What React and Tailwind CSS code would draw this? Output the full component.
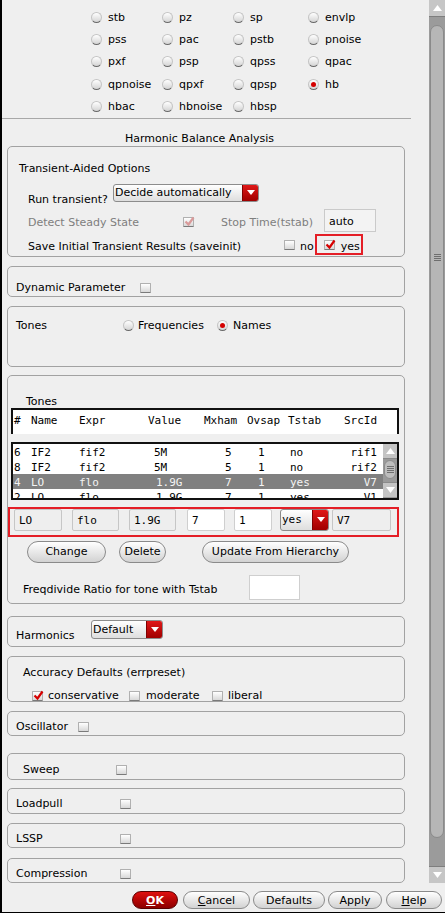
import React from 'react';

function Cb({ checked, disabled }) {
  return (
    <span className="relative inline-block w-[11px] h-[10px] shrink-0 rounded-[1px] border border-[#b0b0b0] border-b-[#7a7a7a] bg-linear-to-b from-white to-[#d8d8d8]">
      {checked && (
        <svg className="absolute left-[0px] top-[-2px]" width="11" height="11" viewBox="0 0 11 11">
          <path d="M1.5 5.5 L4.5 8.5 L9.5 1.5" fill="none" stroke={disabled ? '#d99a9a' : '#d60000'} strokeWidth="2.2" />
        </svg>
      )}
    </span>
  );
}

function Radio({ on }) {
  return (
    <span className="inline-flex w-[11px] h-[11px] shrink-0 items-center justify-center rounded-full border border-[#c4c4c4] border-b-[#6a6a6a] bg-linear-to-b from-white to-[#d4d4d4]">
      {on && <span className="w-[5px] h-[5px] rounded-full bg-[#d40000]" />}
    </span>
  );
}

function Arrow() {
  return (
    <svg width="8" height="5" viewBox="0 0 8 5">
      <path d="M0 0 L8 0 L4 5 Z" fill="#ffffff" />
    </svg>
  );
}

function Dropdown({ text, w, h, mono }) {
  return (
    <div
      className="flex shrink-0 overflow-hidden rounded-[3px] border border-[#8c8c8c] bg-linear-to-b from-white to-[#dedede]"
      style={{ width: w, height: h }}
    >
      <span className={'flex-1 flex items-center pl-[1px] whitespace-nowrap ' + (mono ? "font-['DejaVu_Sans_Mono',monospace]" : '')}>{text}</span>
      <span className="w-[16px] flex items-center justify-center bg-linear-to-b from-[#e01818] to-[#a00000] border-l border-[#800000]">
        <Arrow />
      </span>
    </div>
  );
}

function Pill({ children, w }) {
  return (
    <div
      className="flex h-[22px] shrink-0 items-center justify-center rounded-full border border-[#8a8a8a] bg-linear-to-b from-white to-[#d2d2d2] whitespace-nowrap"
      style={{ width: w }}
    >
      {children}
    </div>
  );
}

function BarBtn({ children, w, red }) {
  return (
    <div
      className={
        'flex h-[18px] shrink-0 items-center justify-center rounded-full border whitespace-nowrap ' +
        (red
          ? 'border-[#5a0000] bg-linear-to-b from-[#e01010] to-[#8c0000] text-white font-bold'
          : 'border-[#8a8a8a] bg-linear-to-b from-white to-[#d2d2d2]')
      }
      style={{ width: w }}
    >
      {children}
    </div>
  );
}

const grid = [
  ['stb', 'pz', 'sp', 'envlp'],
  ['pss', 'pac', 'pstb', 'pnoise'],
  ['pxf', 'psp', 'qpss', 'qpac'],
  ['qpnoise', 'qpxf', 'qpsp', 'hb'],
  ['hbac', 'hbnoise', 'hbsp'],
];
const colW = ['w-[71px]', 'w-[71px]', 'w-[75px]', 'w-[80px]'];

const rows = [
  { n: '6', name: 'IF2', expr: 'fif2', val: '5M', vp: 'pl-[6px]', mx: '5', ov: '1', ts: 'no', src: 'rif1' },
  { n: '8', name: 'IF2', expr: 'fif2', val: '5M', vp: 'pl-[6px]', mx: '5', ov: '1', ts: 'no', src: 'rif2' },
  { n: '4', name: 'LO', expr: 'flo', val: '1.9G', vp: 'pl-[8px]', mx: '7', ov: '1', ts: 'yes', src: 'V7', sel: true },
  { n: '2', name: 'LO', expr: 'flo', val: '1.9G', vp: 'pl-[8px]', mx: '7', ov: '1', ts: 'yes', src: 'V1' },
];

function Grip() {
  return (
    <div className="flex flex-col gap-[1px]">
      <span className="block w-[7px] h-px bg-[#6e6e6e]" />
      <span className="block w-[7px] h-px bg-[#6e6e6e]" />
      <span className="block w-[7px] h-px bg-[#6e6e6e]" />
      <span className="block w-[7px] h-px bg-[#6e6e6e]" />
    </div>
  );
}

function ArrowUp() {
  return (
    <svg width="9" height="6" viewBox="0 0 9 6">
      <path d="M0 6 L9 6 L4.5 0 Z" fill="#ffffff" />
    </svg>
  );
}
function ArrowDown() {
  return (
    <svg width="9" height="6" viewBox="0 0 9 6">
      <path d="M0 0 L9 0 L4.5 6 Z" fill="#ffffff" />
    </svg>
  );
}

const box = 'ml-[5px] w-[398px] shrink-0 rounded-[5px] border border-[#a2a2a2]';
const field = 'flex h-[22px] shrink-0 items-center rounded-[2px] border border-[#c6c6c6] bg-[#eeeeee] pl-[4px] pt-[1px]';
const wfield = 'flex h-[22px] shrink-0 items-center rounded-[2px] border border-[#cfcfcf] bg-white pl-[4px] pt-[1px]';

export default function App() {
  return (
    <div className="w-[445px] h-[913px] overflow-hidden bg-[#efefef] border-l-2 border-b border-black flex flex-col text-[11px] leading-[13px] text-black font-['DejaVu_Sans',sans-serif]">
      <div className="flex h-[884px] shrink-0">
        {/* content */}
        <div className="w-[427px] shrink-0 flex flex-col">
          {/* radio grid */}
          <div className="pt-[6px] pl-[89px]">
            {grid.map((r, i) => (
              <div key={i} className="flex h-[22.4px] items-center">
                {r.map((t, j) => (
                  <div key={t} className={'flex items-center gap-[6px] ' + colW[j]}>
                    <Radio on={t === 'hb'} />
                    <span>{t}</span>
                  </div>
                ))}
              </div>
            ))}
          </div>
          <div className="h-px w-[409px] bg-[#a8a8a8]" />
          <div className="h-[27px] pt-[13px] pl-[123px] whitespace-nowrap">Harmonic Balance Analysis</div>

          {/* transient aided */}
          <div className={box + ' h-[111px]'}>
            <div className="mt-[15px] h-[14px] pl-[11px]">Transient-Aided Options</div>
            <div className="mt-[8px] flex h-[19px] pl-[20px]">
              <span className="w-[85px] mt-[9px] whitespace-nowrap">Run transient?</span>
              <Dropdown text="Decide automatically" w={146} h={18} />
            </div>
            <div className="mt-[6px] flex h-[24px] items-start pl-[20px]">
              <span className="w-[155px] mt-[7px] text-[#7e7e7e] whitespace-nowrap">Detect Steady State</span>
              <span className="mt-[8px]">
                <Cb checked disabled />
              </span>
              <span className="ml-[27px] mt-[7px] w-[103px] text-[#7e7e7e] whitespace-nowrap">Stop Time(tstab)</span>
              <div className="flex h-[23px] w-[52px] items-center border border-[#cacaca] bg-[#f3f3f3] pl-[4px] pt-[2px]">auto</div>
            </div>
            <div className="mt-[1px] flex h-[22px] items-start pl-[20px]">
              <span className="w-[256px] mt-[6px] whitespace-nowrap">Save Initial Transient Results (saveinit)</span>
              <span className="mt-[6px]">
                <Cb />
              </span>
              <span className="ml-[5px] mt-[6px]">no</span>
              <div className="ml-[1px] flex h-[21px] w-[48px] items-start border-2 border-[#e41e26] pl-[7px]">
                <span className="mt-[4px]">
                  <Cb checked />
                </span>
                <span className="ml-[6px] mt-[4px]">yes</span>
              </div>
            </div>
          </div>

          {/* dynamic parameter */}
          <div className={box + ' mt-[9px] h-[31px]'}>
            <div className="mt-[14px] flex h-[14px] items-center pl-[8px]">
              <span className="w-[124px] whitespace-nowrap">Dynamic Parameter</span>
              <Cb />
            </div>
          </div>

          {/* tones radio */}
          <div className={box + ' mt-[9px] h-[61px]'}>
            <div className="mt-[12px] flex h-[14px] items-center pl-[8px]">
              <span className="w-[107px]">Tones</span>
              <Radio />
              <span className="ml-[4px] w-[79px]">Frequencies</span>
              <Radio on />
              <span className="ml-[5px]">Names</span>
            </div>
          </div>

          {/* tones table */}
          <div className={box + ' mt-[8px] h-[229px]'}>
            <div className="mt-[19px] h-[13px] pl-[18px]">Tones</div>
            <div className="ml-[3px] h-[26px] w-[388px] border-t-2 border-l-2 border-r-2 border-[#111] bg-white pt-[4px] flex font-['DejaVu_Sans_Mono',monospace] whitespace-nowrap">
              <span className="w-[18px] pl-[1px]">#</span>
              <span className="w-[48px]">Name</span>
              <span className="w-[69px]">Expr</span>
              <span className="w-[56px]">Value</span>
              <span className="w-[43px]">Mxham</span>
              <span className="w-[41px]">Ovsap</span>
              <span className="w-[56px]">Tstab</span>
              <span>SrcId</span>
            </div>
            <div className="ml-[3px] mt-[8px] flex h-[58px] w-[388px] overflow-hidden border-2 border-[#111] bg-white">
              <div className="w-[370px] shrink-0 font-['DejaVu_Sans_Mono',monospace] whitespace-nowrap">
                {rows.map((r, i) => (
                  <div
                    key={i}
                    className={'flex h-[15px] items-start pt-[2px] ' + (r.sel ? 'bg-[#808080] text-[#f4f4f4]' : '')}
                  >
                    <span className="w-[18px] pl-[1px]">{r.n}</span>
                    <span className="w-[48px]">{r.name}</span>
                    <span className="w-[69px]">{r.expr}</span>
                    <span className={'w-[56px] ' + r.vp}>{r.val}</span>
                    <span className="w-[43px] pl-[21px]">{r.mx}</span>
                    <span className="w-[41px] pl-[11px]">{r.ov}</span>
                    <span className="w-[50px] pl-[2px]">{r.ts}</span>
                    <span className="w-[39px] text-right">{r.src}</span>
                  </div>
                ))}
              </div>
              <div className="flex w-[15px] flex-col bg-[#9a9a9a]">
                <div className="flex h-[15px] items-center justify-center bg-[#c4c4c4] border-b border-[#8a8a8a]">
                  <ArrowUp />
                </div>
                <div className="mx-[1px] mt-[1px] flex h-[19px] items-center justify-center rounded-full border border-[#8c8c8c] bg-[#bdbdbd]">
                  <Grip />
                </div>
                <div className="flex-1" />
                <div className="mb-[1px] flex h-[15px] items-center justify-center bg-[#c4c4c4] border-t border-[#8a8a8a]">
                  <ArrowDown />
                </div>
              </div>
            </div>
            <div className="mt-[7px] flex h-[30px] w-[391px] items-start border-2 border-[#e41e26] pl-[4px] font-['DejaVu_Sans_Mono',monospace]">
              <div className={field + ' w-[48px]'}>LO</div>
              <div className={field + ' ml-[10px] w-[47px]'}>flo</div>
              <div className={field + ' ml-[10px] w-[47px]'}>1.9G</div>
              <div className={wfield + ' ml-[11px] w-[38px]'}>7</div>
              <div className={wfield + ' ml-[9px] w-[38px]'}>1</div>
              <div className="ml-[8px]">
                <Dropdown text="yes" w={49} h={22} mono />
              </div>
              <div className={field + ' ml-[3px] w-[59px]'}>V7</div>
            </div>
            <div className="mt-[4px] flex h-[22px] pl-[19px]">
              <Pill w={79}>Change</Pill>
              <div className="ml-[13px]">
                <Pill w={47}>Delete</Pill>
              </div>
              <div className="ml-[36px]">
                <Pill w={147}>Update From Hierarchy</Pill>
              </div>
            </div>
            <div className="mt-[12px] flex h-[25px] items-start pl-[15px]">
              <span className="w-[226px] mt-[8px] whitespace-nowrap">Freqdivide Ratio for tone with Tstab</span>
              <div className="h-[25px] w-[51px] border border-[#cfcfcf] bg-white" />
            </div>
          </div>

          {/* harmonics */}
          <div className={box + ' mt-[12px] h-[31px] flex items-start pl-[8px]'}>
            <span className="w-[75px] mt-[12px]">Harmonics</span>
            <div className="mt-[3px]">
              <Dropdown text="Default" w={72} h={19} />
            </div>
          </div>

          {/* accuracy */}
          <div className={box + ' mt-[9px] h-[46px]'}>
            <div className="mt-[9px] h-[14px] pl-[15px] whitespace-nowrap">Accuracy Defaults (errpreset)</div>
            <div className="mt-[9px] flex h-[14px] items-center pl-[24px]">
              <Cb checked />
              <span className="ml-[5px] w-[81px]">conservative</span>
              <Cb />
              <span className="ml-[6px] w-[66px]">moderate</span>
              <Cb />
              <span className="ml-[5px]">liberal</span>
            </div>
          </div>

          {/* oscillator */}
          <div className={box + ' mt-[9px] h-[25px]'}>
            <div className="mt-[8px] flex h-[14px] items-center pl-[8px]">
              <span className="w-[62px]">Oscillator</span>
              <Cb />
            </div>
          </div>

          {/* sweep */}
          <div className={box + ' mt-[17px] h-[27px]'}>
            <div className="mt-[9px] flex h-[14px] items-center pl-[15px]">
              <span className="w-[93px]">Sweep</span>
              <Cb />
            </div>
          </div>

          <div className={box + ' mt-[8px] h-[26px]'}>
            <div className="mt-[8px] flex h-[14px] items-center pl-[8px]">
              <span className="w-[104px]">Loadpull</span>
              <Cb />
            </div>
          </div>

          <div className={box + ' mt-[9px] h-[25px]'}>
            <div className="mt-[8px] flex h-[14px] items-center pl-[8px]">
              <span className="w-[104px]">LSSP</span>
              <Cb />
            </div>
          </div>

          <div className={box + ' mt-[10px] h-[25px]'}>
            <div className="mt-[8px] flex h-[14px] items-center pl-[8px]">
              <span className="w-[104px]">Compression</span>
              <Cb />
            </div>
          </div>
        </div>

        {/* main scrollbar */}
        <div className="w-[16px] shrink-0 flex flex-col bg-[#9b9b9b] h-[883px]">
          <div className="flex h-[17px] items-center justify-center bg-[#c6c6c6] border-b border-[#7e7e7e]">
            <ArrowUp />
          </div>
          <div className="mt-[8px] mx-[1px] h-[813px] rounded-[7px] border border-[#8a8a8a] bg-[#b6b6b6] flex flex-col items-center pt-[228px]">
            <Grip />
          </div>
          <div className="flex-1" />
          <div className="flex h-[17px] items-center justify-center bg-[#c6c6c6] border-t border-[#7e7e7e]">
            <ArrowDown />
          </div>
        </div>
      </div>

      {/* button bar */}
      <div className="flex flex-1 items-start pt-[7px] pl-[130px]">
        <BarBtn w={46} red>
          <span className="underline">O</span>K
        </BarBtn>
        <div className="ml-[5px]">
          <BarBtn w={67}>
            <span className="underline">C</span>ancel
          </BarBtn>
        </div>
        <div className="ml-[3px]">
          <BarBtn w={72}>Defaults</BarBtn>
        </div>
        <div className="ml-[3px]">
          <BarBtn w={54}>Apply</BarBtn>
        </div>
        <div className="ml-[4px]">
          <BarBtn w={56}>
            <span className="underline">H</span>elp
          </BarBtn>
        </div>
      </div>
    </div>
  );
}
